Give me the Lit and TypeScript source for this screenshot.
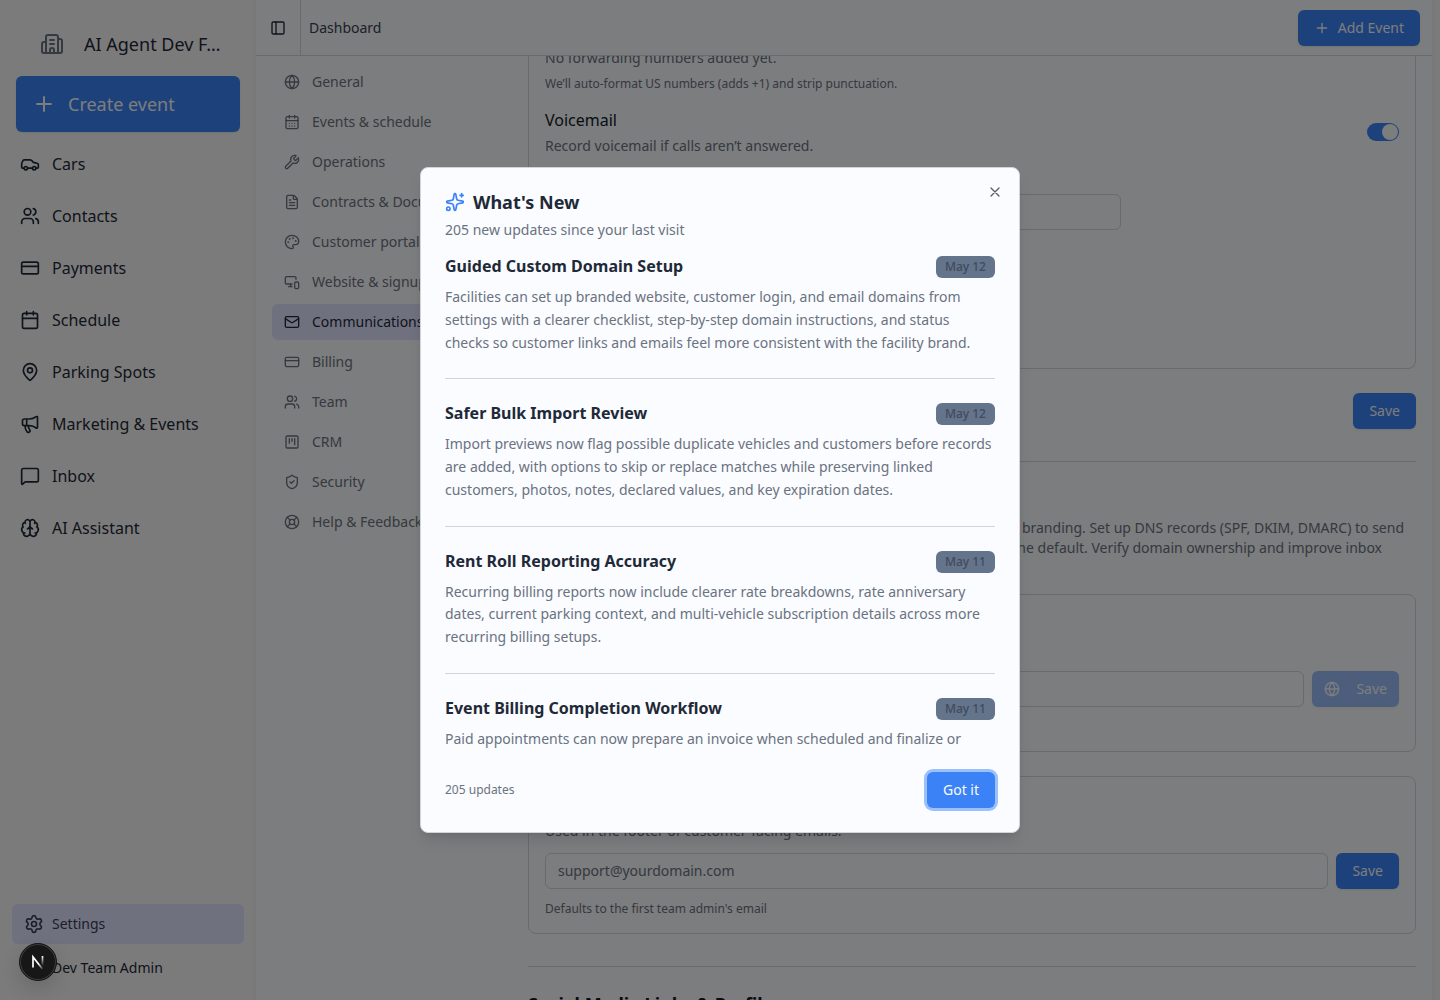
import { LitElement, html, css, svg } from "lit";
import { customElement, property } from "lit/decorators.js";

const rect = (x: number, y: number, w: number, h: number, r = 2) =>
  svg`<rect x=${x} y=${y} width=${w} height=${h} rx=${r}></rect>`;
const circle = (x: number, y: number, r: number) => svg`<circle cx=${x} cy=${y} r=${r}></circle>`;
const path = (d: string) => svg`<path d=${d}></path>`;

const ICONS: Record<string, unknown> = {
  building: path("M10 12h4M10 8h4M14 21v-3a2 2 0 0 0-4 0v3M6 10H4a2 2 0 0 0-2 2v7a2 2 0 0 0 2 2h16a2 2 0 0 0 2-2V9a2 2 0 0 0-2-2h-2M6 21V5a2 2 0 0 1 2-2h8a2 2 0 0 1 2 2v16"),
  plus: path("M5 12h14M12 5v14"),
  x: path("M18 6 6 18M6 6l12 12"),
  car: [
    path("M19 17h2c.6 0 1-.4 1-1v-3c0-.9-.7-1.7-1.5-1.9C18.7 10.6 16 10 16 10s-1.3-1.4-2.2-2.3c-.5-.4-1.1-.7-1.8-.7H5c-.6 0-1.1.4-1.4.9l-1.4 2.9A3.7 3.7 0 0 0 2 12v4c0 .6.4 1 1 1h2M9 17h6"),
    circle(7, 17, 2),
    circle(17, 17, 2),
  ],
  users: [
    path("M16 21v-2a4 4 0 0 0-4-4H6a4 4 0 0 0-4 4v2M16 3.128a4 4 0 0 1 0 7.744M22 21v-2a4 4 0 0 0-3-3.87"),
    circle(9, 7, 4),
  ],
  card: [rect(2, 5, 20, 14), path("M2 10h20")],
  calendar: [rect(3, 4, 18, 18), path("M8 2v4M16 2v4M3 10h18")],
  days: [
    rect(3, 4, 18, 18),
    path("M8 2v4M16 2v4M3 10h18M8 14h.01M12 14h.01M16 14h.01M8 18h.01M12 18h.01M16 18h.01"),
  ],
  pin: [
    path("M20 10c0 4.993-5.539 10.193-7.399 11.799a1 1 0 0 1-1.202 0C9.539 20.193 4 14.993 4 10a8 8 0 0 1 16 0"),
    circle(12, 10, 3),
  ],
  megaphone: path("M11 6a13 13 0 0 0 8.4-2.8A1 1 0 0 1 21 4v12a1 1 0 0 1-1.6.8A13 13 0 0 0 11 14H5a2 2 0 0 1-2-2V8a2 2 0 0 1 2-2zM6 14a12 12 0 0 0 2.4 7.2 2 2 0 0 0 3.2-2.4A8 8 0 0 1 10 14M8 6v8"),
  message: path("M22 17a2 2 0 0 1-2 2H6.828a2 2 0 0 0-1.414.586l-2.202 2.202A.71.71 0 0 1 2 21.286V5a2 2 0 0 1 2-2h16a2 2 0 0 1 2 2z"),
  brain: path("M12 18V5M15 13a4.17 4.17 0 0 1-3-4 4.17 4.17 0 0 1-3 4M17.598 6.5A3 3 0 1 0 12 5a3 3 0 1 0-5.598 1.5M17.997 5.125a4 4 0 0 1 2.526 5.77M18 18a4 4 0 0 0 2-7.464M19.967 17.483A4 4 0 1 1 12 18a4 4 0 1 1-7.967-.517M6 18a4 4 0 0 1-2-7.464M6.003 5.125a4 4 0 0 0-2.526 5.77"),
  settings: [
    path("M9.671 4.136a2.34 2.34 0 0 1 4.659 0 2.34 2.34 0 0 0 3.319 1.915 2.34 2.34 0 0 1 2.33 4.033 2.34 2.34 0 0 0 0 3.831 2.34 2.34 0 0 1-2.33 4.033 2.34 2.34 0 0 0-3.319 1.915 2.34 2.34 0 0 1-4.659 0 2.34 2.34 0 0 0-3.32-1.915 2.34 2.34 0 0 1-2.33-4.033 2.34 2.34 0 0 0 0-3.831A2.34 2.34 0 0 1 6.35 6.051a2.34 2.34 0 0 0 3.319-1.915"),
    circle(12, 12, 3),
  ],
  panel: [rect(3, 3, 18, 18), path("M9 3v18")],
  globe: [circle(12, 12, 10), path("M12 2a14.5 14.5 0 0 0 0 20 14.5 14.5 0 0 0 0-20M2 12h20")],
  wrench: path("M14.7 6.3a1 1 0 0 0 0 1.4l1.6 1.6a1 1 0 0 0 1.4 0l3.106-3.105c.32-.322.863-.22.983.218a6 6 0 0 1-8.259 7.057l-7.91 7.91a1 1 0 0 1-2.999-3l7.91-7.91a6 6 0 0 1 7.057-8.259c.438.12.54.662.219.984z"),
  file: path("M6 22a2 2 0 0 1-2-2V4a2 2 0 0 1 2-2h8a2.4 2.4 0 0 1 1.704.706l3.588 3.588A2.4 2.4 0 0 1 20 8v12a2 2 0 0 1-2 2zM14 2v5a1 1 0 0 0 1 1h5M10 9H8M16 13H8M16 17H8"),
  palette: [
    path("M12 22a1 1 0 0 1 0-20 10 9 0 0 1 10 9 5 5 0 0 1-5 5h-2.25a1.75 1.75 0 0 0-1.4 2.8l.3.4a1.75 1.75 0 0 1-1.4 2.8z"),
    circle(13.5, 6.5, 0.5),
    circle(17.5, 10.5, 0.5),
    circle(6.5, 12.5, 0.5),
    circle(8.5, 7.5, 0.5),
  ],
  devices: [
    path("M18 8V6a2 2 0 0 0-2-2H4a2 2 0 0 0-2 2v7a2 2 0 0 0 2 2h8M10 19v-3.96 3.15M7 19h5"),
    rect(16, 12, 6, 10),
  ],
  mail: [rect(2, 4, 20, 16), path("m22 7-8.991 5.727a2 2 0 0 1-2.009 0L2 7")],
  kanban: [rect(3, 3, 18, 18), path("M8 7v7M12 7v4M16 7v9")],
  shield: path("M20 13c0 5-3.5 7.5-7.66 8.95a1 1 0 0 1-.67-.01C7.5 20.5 4 18 4 13V6a1 1 0 0 1 1-1c2 0 4.5-1.2 6.24-2.72a1.17 1.17 0 0 1 1.52 0C14.51 3.81 17 5 19 5a1 1 0 0 1 1 1zM9 12l2 2 4-4"),
  buoy: [
    circle(12, 12, 10),
    path("m4.93 4.93 4.24 4.24M14.83 9.17l4.24-4.24M14.83 14.83l4.24 4.24M9.17 14.83l-4.24 4.24"),
    circle(12, 12, 4),
  ],
  sparkles: [
    path("M11.017 2.814a1 1 0 0 1 1.966 0l1.051 5.558a2 2 0 0 0 1.594 1.594l5.558 1.051a1 1 0 0 1 0 1.966l-5.558 1.051a2 2 0 0 0-1.594 1.594l-1.051 5.558a1 1 0 0 1-1.966 0l-1.051-5.558a2 2 0 0 0-1.594-1.594l-5.558-1.051a1 1 0 0 1 0-1.966l5.558-1.051a2 2 0 0 0 1.594-1.594zM20 2v4M22 4h-4"),
    circle(4, 20, 2),
  ],
};

@customElement("ui-icon")
export class UiIcon extends LitElement {
  @property() name = "";
  @property({ type: Number }) size = 16;
  static styles = css`
    :host { display: inline-flex; flex: none; }
    svg { display: block; fill: none; stroke: currentColor; stroke-width: 2; stroke-linecap: round; stroke-linejoin: round; }
  `;
  render() {
    return html`<svg width=${this.size} height=${this.size} viewBox="0 0 24 24">${ICONS[this.name]}</svg>`;
  }
}

@customElement("app-sidebar")
export class AppSidebar extends LitElement {
  static styles = css`
    :host { display: flex; flex-direction: column; width: 256px; flex: none; box-sizing: border-box; padding: 12px 16px 12px; color: #1f2937; }
    .team { display: flex; align-items: center; gap: 20px; height: 64px; padding-left: 24px; font-size: 18px; line-height: 28px; }
    .team ui-icon { color: #6b7280; }
    .create { display: flex; align-items: center; gap: 12px; height: 56px; padding-left: 16px; border-radius: 6px; background: #3b82f6; color: #f9fafb; font-size: 18px; box-shadow: 0 1px 2px rgba(0, 0, 0, 0.08); }
    .nav { display: flex; flex-direction: column; gap: 12px; padding-top: 12px; flex: 1; }
    .item { display: flex; align-items: center; gap: 12px; height: 40px; padding-left: 4px; font-size: 16px; }
    .settings { display: flex; align-items: center; gap: 8px; height: 40px; margin: 0 -4px; padding-left: 12px; border-radius: 6px; background: #e0e3ff; color: #374151; font-size: 14px; line-height: 20px; }
    .user { display: flex; align-items: center; height: 44px; padding: 4px 0 0 36px; box-sizing: border-box; font-size: 14px; line-height: 20px; }
  `;
  private items = [
    ["car", "Cars"],
    ["users", "Contacts"],
    ["card", "Payments"],
    ["calendar", "Schedule"],
    ["pin", "Parking Spots"],
    ["megaphone", "Marketing & Events"],
    ["message", "Inbox"],
    ["brain", "AI Assistant"],
  ];
  render() {
    return html`
      <div class="team"><ui-icon name="building" size="24"></ui-icon><span>AI Agent Dev F…</span></div>
      <div class="create"><ui-icon name="plus" size="24"></ui-icon><span>Create event</span></div>
      <div class="nav">
        ${this.items.map(([icon, label]) => html`<div class="item"><ui-icon name=${icon} size="20"></ui-icon><span>${label}</span></div>`)}
      </div>
      <div class="settings"><ui-icon name="settings" size="20"></ui-icon><span>Settings</span></div>
      <div class="user">Dev Team Admin</div>
    `;
  }
}

@customElement("settings-nav")
export class SettingsNav extends LitElement {
  static styles = css`
    :host { display: flex; flex-direction: column; gap: 4px; width: 240px; flex: none; padding-top: 8px; }
    .item { display: flex; align-items: center; gap: 12px; height: 36px; padding-left: 12px; border-radius: 6px; font-size: 14px; line-height: 20px; color: #6b7280; }
    .active { background: #e0e3ff; color: #1f2937; }
  `;
  private items = [
    ["globe", "General"],
    ["days", "Events & schedule"],
    ["wrench", "Operations"],
    ["file", "Contracts & Documents"],
    ["palette", "Customer portal"],
    ["devices", "Website & signup"],
    ["mail", "Communications"],
    ["card", "Billing"],
    ["users", "Team"],
    ["kanban", "CRM"],
    ["shield", "Security"],
    ["buoy", "Help & Feedback"],
  ];
  render() {
    return this.items.map(
      ([icon, label]) => html`<div class="item ${label === "Communications" ? "active" : ""}"><ui-icon name=${icon} size="16"></ui-icon><span>${label}</span></div>`
    );
  }
}

@customElement("settings-content")
export class SettingsContent extends LitElement {
  static styles = css`
    :host { display: flex; flex-direction: column; flex: 1; min-width: 0; font-size: 14px; line-height: 20px; color: #6b7280; }
    .card { flex: none; border: 1px solid #d1d5db; border-radius: 8px; padding: 16px; box-sizing: border-box; }
    .phone { border-top: none; border-radius: 0 0 8px 8px; height: 321px; margin-top: -8px; padding-top: 0; }
    .small { font-size: 12px; line-height: 16px; }
    .phone .small { margin-top: 8px; }
    .row { display: flex; justify-content: space-between; align-items: center; margin-top: 16px; }
    .label { font-size: 16px; line-height: 24px; color: #111827; }
    .desc { margin-top: 4px; }
    .switch { display: flex; justify-content: flex-end; align-items: center; width: 32px; height: 18px; box-sizing: border-box; padding: 1px; border-radius: 9px; background: #3b82f6; }
    .thumb { width: 16px; height: 16px; border-radius: 50%; background: #f9fafb; }
    .input { border: 1px solid #d1d5db; border-radius: 6px; height: 36px; box-sizing: border-box; padding: 0 12px; display: flex; align-items: center; flex: 1; }
    .half { width: 576px; margin-top: 38px; }
    .btn { display: flex; align-items: center; height: 36px; padding: 0 16px; border-radius: 6px; background: #3b82f6; color: #f9fafb; box-shadow: 0 1px 2px rgba(0, 0, 0, 0.08); }
    .disabled { opacity: 0.5; padding: 0 12px; gap: 16px; }
    .actions { display: flex; flex: none; justify-content: flex-end; margin-top: 24px; }
    .sep { height: 1px; background: #d1d5db; margin-top: 32px; flex: none; }
    .copy { flex: none; margin-top: 56px; height: 60px; display: flex; flex-direction: column; align-items: flex-end; white-space: nowrap; }
    .line1 { padding-right: 12px; }
    .line2 { padding-right: 34px; }
    .domain { height: 158px; margin-top: 16px; padding-top: 76px; }
    .support { height: 158px; margin-top: 24px; padding-top: 44px; }
    .field { display: flex; gap: 8px; }
    .support .field { margin-top: 12px; }
    .support .small { margin-top: 12px; }
    .heading { flex: none; font-size: 18px; line-height: 28px; font-weight: 700; color: #111827; margin-top: 23px; }
  `;
  render() {
    return html`
      <section class="card phone">
        <div>No forwarding numbers added yet.</div>
        <div class="small">We’ll auto-format US numbers (adds +1) and strip punctuation.</div>
        <div class="row">
          <div>
            <div class="label">Voicemail</div>
            <div class="desc">Record voicemail if calls aren’t answered.</div>
          </div>
          <div class="switch"><div class="thumb"></div></div>
        </div>
        <div class="input half"></div>
      </section>
      <div class="actions"><div class="btn">Save</div></div>
      <div class="sep"></div>
      <div class="copy">
        <span class="line1">branding. Set up DNS records (SPF, DKIM, DMARC) to send</span>
        <span class="line2">the default. Verify domain ownership and improve inbox</span>
      </div>
      <section class="card domain">
        <div class="field">
          <div class="input"></div>
          <div class="btn disabled"><ui-icon name="globe" size="16"></ui-icon><span>Save</span></div>
        </div>
      </section>
      <section class="card support">
        <div>Used in the footer of customer-facing emails.</div>
        <div class="field">
          <div class="input">support@yourdomain.com</div>
          <div class="btn">Save</div>
        </div>
        <div class="small">Defaults to the first team admin's email</div>
      </section>
      <div class="sep"></div>
      <div class="heading">Social Media Links & Profiles</div>
    `;
  }
}

@customElement("whats-new-dialog")
export class WhatsNewDialog extends LitElement {
  static styles = css`
    :host { position: relative; display: flex; flex-direction: column; gap: 16px; width: 600px; height: 666px; box-sizing: border-box; padding: 24px; border: 1px solid #d1d5db; border-radius: 8px; background: #fafcff; color: #1f2937; box-shadow: 0 10px 15px -3px rgba(0, 0, 0, 0.1), 0 4px 6px -4px rgba(0, 0, 0, 0.1); }
    .head { display: flex; flex-direction: column; gap: 8px; }
    .title { display: flex; align-items: center; gap: 8px; height: 20px; font-size: 18px; line-height: 18px; font-weight: 700; }
    .title ui-icon { color: #3b82f6; }
    .sub { font-size: 14px; line-height: 20px; color: #6b7280; }
    .close { position: absolute; top: 16px; right: 16px; color: #5b616b; }
    .list { flex: 1; min-height: 0; overflow: hidden; display: flex; flex-direction: column; gap: 24px; }
    .entry { flex: none; padding-bottom: 24px; border-bottom: 1px solid #d1d5db; }
    .top { display: flex; justify-content: space-between; align-items: flex-start; height: 22px; font-size: 16px; line-height: 20px; font-weight: 700; }
    .badge { box-sizing: border-box; height: 22px; padding: 3px 9px; border-radius: 6px; background: #64748b; color: #3f4b5e; font-size: 12px; line-height: 16px; font-weight: 500; }
    .body { margin: 8px 0 0; font-size: 14px; line-height: 22.75px; color: #6b7280; }
    .foot { display: flex; justify-content: space-between; align-items: center; font-size: 12px; line-height: 16px; color: #6b7280; }
    .ok { height: 36px; line-height: 36px; padding: 0 16px; border-radius: 6px; background: #3b82f6; color: #f9fafb; font-size: 14px; box-shadow: 0 0 0 3px #9cc0fb; }
  `;
  private entries = [
    ["Guided Custom Domain Setup", "May 12", "Facilities can set up branded website, customer login, and email domains from settings with a clearer checklist, step-by-step domain instructions, and status checks so customer links and emails feel more consistent with the facility brand."],
    ["Safer Bulk Import Review", "May 12", "Import previews now flag possible duplicate vehicles and customers before records are added, with options to skip or replace matches while preserving linked customers, photos, notes, declared values, and key expiration dates."],
    ["Rent Roll Reporting Accuracy", "May 11", "Recurring billing reports now include clearer rate breakdowns, rate anniversary dates, current parking context, and multi-vehicle subscription details across more recurring billing setups."],
    ["Event Billing Completion Workflow", "May 11", "Paid appointments can now prepare an invoice when scheduled and finalize or"],
  ];
  render() {
    return html`
      <div class="head">
        <div class="title"><ui-icon name="sparkles" size="20"></ui-icon><span>What's New</span></div>
        <div class="sub">205 new updates since your last visit</div>
      </div>
      <div class="list">
        ${this.entries.map(
          ([title, date, body]) => html`<article class="entry">
            <div class="top"><span>${title}</span><span class="badge">${date}</span></div>
            <p class="body">${body}</p>
          </article>`
        )}
      </div>
      <div class="foot"><span>205 updates</span><div class="ok">Got it</div></div>
      <ui-icon class="close" name="x" size="16"></ui-icon>
    `;
  }
}

@customElement("app-root")
export class AppRoot extends LitElement {
  static styles = css`
    :host { display: flex; position: relative; width: 1440px; height: 1000px; overflow: hidden; background: #f7f7f7; font-family: "Noto Sans", sans-serif; }
    .main { display: flex; flex-direction: column; width: 1176px; height: 1000px; background: #f9fafc; box-shadow: 0 0 4px rgba(0, 0, 0, 0.08); }
    .bar { display: flex; align-items: center; height: 56px; flex: none; box-sizing: border-box; border-bottom: 1px solid #d1d5db; padding-right: 12px; font-size: 14px; line-height: 20px; color: #374151; }
    .toggle { display: flex; align-items: center; width: 45px; height: 55px; box-sizing: border-box; padding-left: 14px; border-right: 1px solid #d1d5db; color: #1f2937; }
    .crumb { flex: 1; padding-left: 8px; }
    .add { display: flex; align-items: center; gap: 8px; height: 36px; padding: 0 16px; border-radius: 6px; background: #3b82f6; color: #f9fafb; box-shadow: 0 1px 2px rgba(0, 0, 0, 0.08); }
    .body { display: flex; flex: 1; min-height: 0; gap: 16px; padding: 0 16px; overflow: hidden; }
    .overlay { position: absolute; inset: 0; display: flex; align-items: center; justify-content: center; background: rgba(0, 0, 0, 0.5); }
    .dev { position: absolute; left: 19px; top: 943px; width: 38px; height: 38px; box-sizing: border-box; border-radius: 50%; background: #171717; border: 1px solid #171717; box-shadow: inset 0 0 0 1px #3e3e3e, 0 8px 20px rgba(0, 0, 0, 0.14); display: flex; align-items: center; justify-content: center; }
  `;
  render() {
    return html`
      <app-sidebar></app-sidebar>
      <div class="main">
        <div class="bar">
          <div class="toggle"><ui-icon name="panel" size="16"></ui-icon></div>
          <span class="crumb">Dashboard</span>
          <div class="add"><ui-icon name="plus" size="16"></ui-icon><span>Add Event</span></div>
        </div>
        <div class="body">
          <settings-nav></settings-nav>
          <settings-content></settings-content>
        </div>
      </div>
      <div class="overlay"><whats-new-dialog></whats-new-dialog></div>
      <div class="dev">
        <svg width="14" height="16" viewBox="0 0 14 16" fill="none">
          <defs>
            <linearGradient id="diag" gradientUnits="userSpaceOnUse" x1="6" y1="7" x2="13" y2="15">
              <stop offset="0.3" stop-color="#fff"></stop><stop offset="1" stop-color="#fff" stop-opacity="0"></stop>
            </linearGradient>
            <linearGradient id="stem" gradientUnits="userSpaceOnUse" x1="11.5" y1="2" x2="11.5" y2="12">
              <stop stop-color="#fff"></stop><stop offset="1" stop-color="#fff" stop-opacity="0"></stop>
            </linearGradient>
          </defs>
          <path d="M2 13.5V3l9.5 12" stroke="url(#diag)" stroke-width="1.7"></path>
          <path d="M11.5 2v10" stroke="url(#stem)" stroke-width="1.7"></path>
        </svg>
      </div>
    `;
  }
}
